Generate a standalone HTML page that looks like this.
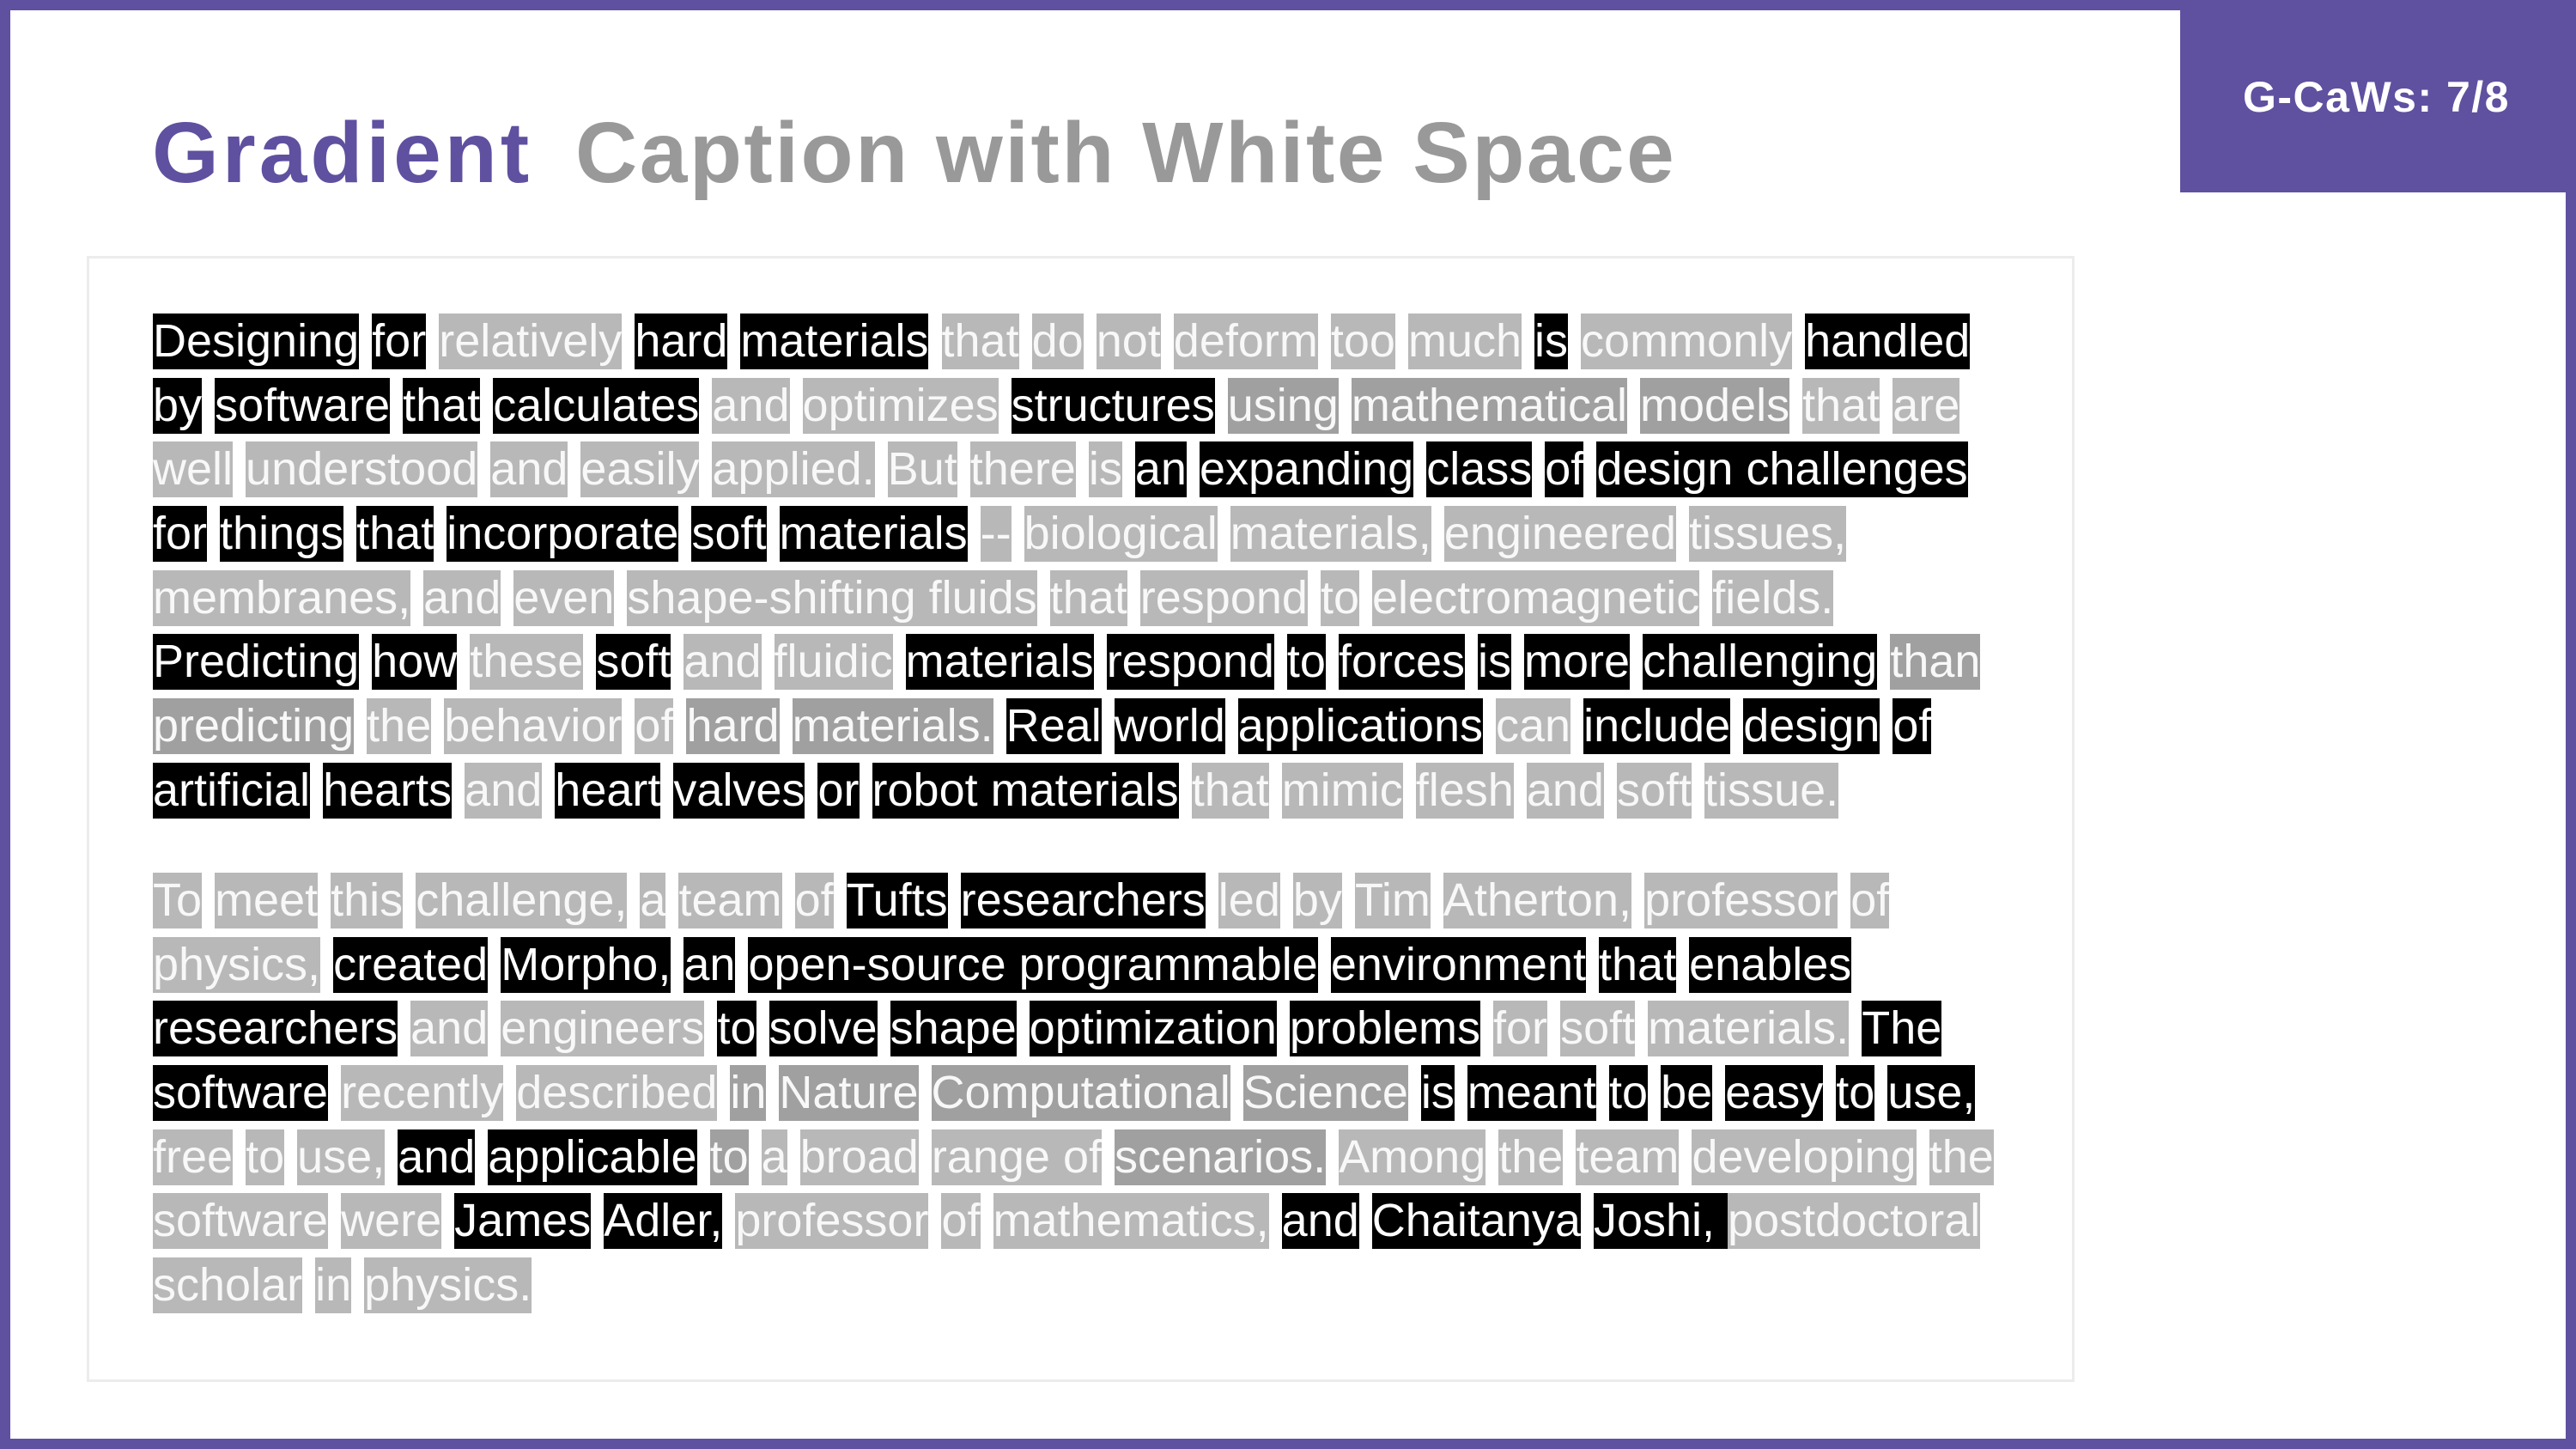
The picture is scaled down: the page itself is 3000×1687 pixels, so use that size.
<!DOCTYPE html>
<html><head><meta charset="utf-8"><style>
html,body{margin:0;padding:0}
body{width:3000px;height:1687px;position:relative;background:#fff;overflow:hidden;font-family:"Liberation Sans",Arial,sans-serif}
.frame{position:absolute;left:0;top:0;width:3000px;height:1687px;box-sizing:border-box;border:12px solid #6050a0}
.tag{position:absolute;left:2539px;top:2px;width:461px;height:222px;background:#6050a0;color:#fff;font-weight:bold;font-size:50px;text-align:center;line-height:222px;box-sizing:border-box;padding-right:4px;letter-spacing:1.5px}
.tagbg{position:absolute;left:2539px;top:0;width:461px;height:222px;background:#6050a0}
.t1{position:absolute;left:177px;top:118px;font-size:100px;font-weight:bold;color:#6050a0;letter-spacing:4px;line-height:120px;white-space:nowrap}
.t2{position:absolute;left:670px;top:118px;font-size:100px;font-weight:bold;color:#999;letter-spacing:2.5px;line-height:120px;white-space:nowrap}
.box{position:absolute;left:101px;top:298px;width:2315px;height:1311px;box-sizing:border-box;border:3px solid #ececec}
.ln{position:absolute;left:178px;height:65px;white-space:pre;font-size:54px;line-height:65px}
.ln span{display:inline-block;height:65px;line-height:65px;vertical-align:top}
.b{background:#000;color:#fff}
.l{background:#b8b8b8;color:#f8f8f8}
.m{background:#a0a0a0;color:#f8f8f8}
</style></head><body>
<div class="frame"></div>
<div class="tagbg"></div>
<div class="tag">G-CaWs: 7/8</div>
<div class="t1">Gradient</div>
<div class="t2">Caption with White Space</div>
<div class="box"></div>

<div class="ln" style="top:365px"><span class="b">Designing</span> <span class="b">for</span> <span class="l">relatively</span> <span class="b">hard</span> <span class="b">materials</span> <span class="l">that</span> <span class="l">do</span> <span class="l">not</span> <span class="l">deform</span> <span class="l">too</span> <span class="l">much</span> <span class="b">is</span> <span class="l">commonly</span> <span class="b">handled</span></div>
<div class="ln" style="top:440px"><span class="b">by</span> <span class="b">software</span> <span class="b">that</span> <span class="b">calculates</span> <span class="l">and</span> <span class="l">optimizes</span> <span class="b">structures</span> <span class="m">using</span> <span class="m">mathematical</span> <span class="m">models</span> <span class="l">that</span> <span class="l">are</span></div>
<div class="ln" style="top:514px"><span class="l">well</span> <span class="l">understood</span> <span class="l">and</span> <span class="l">easily</span> <span class="l">applied.</span> <span class="l">But</span> <span class="l">there</span> <span class="l">is</span> <span class="b">an</span> <span class="b">expanding</span> <span class="b">class</span> <span class="b">of</span> <span class="b">design challenges</span></div>
<div class="ln" style="top:589px"><span class="b">for</span> <span class="b">things</span> <span class="b">that</span> <span class="b">incorporate</span> <span class="b">soft</span> <span class="b">materials</span> <span class="l">--</span> <span class="l">biological</span> <span class="l">materials,</span> <span class="l">engineered</span> <span class="l">tissues,</span></div>
<div class="ln" style="top:664px"><span class="l">membranes,</span> <span class="l">and</span> <span class="l">even</span> <span class="l">shape-shifting fluids</span> <span class="l">that</span> <span class="l">respond</span> <span class="l">to</span> <span class="l">electromagnetic</span> <span class="l">fields.</span></div>
<div class="ln" style="top:738px"><span class="b">Predicting</span> <span class="b">how</span> <span class="l">these</span> <span class="b">soft</span> <span class="l">and</span> <span class="l">fluidic</span> <span class="b">materials</span> <span class="b">respond</span> <span class="b">to</span> <span class="b">forces</span> <span class="b">is</span> <span class="b">more</span> <span class="b">challenging</span> <span class="m">than</span></div>
<div class="ln" style="top:813px"><span class="m">predicting</span> <span class="l">the</span> <span class="l">behavior</span> <span class="l">of</span> <span class="m">hard</span> <span class="m">materials.</span> <span class="b">Real</span> <span class="b">world</span> <span class="b">applications</span> <span class="l">can</span> <span class="b">include</span> <span class="b">design</span> <span class="b">of</span></div>
<div class="ln" style="top:888px"><span class="b">artificial</span> <span class="b">hearts</span> <span class="l">and</span> <span class="b">heart</span> <span class="b">valves</span> <span class="b">or</span> <span class="b">robot materials</span> <span class="l">that</span> <span class="l">mimic</span> <span class="l">flesh</span> <span class="l">and</span> <span class="l">soft</span> <span class="l">tissue.</span></div>

<div class="ln" style="top:1016px"><span class="l">To</span> <span class="l">meet</span> <span class="l">this</span> <span class="l">challenge,</span> <span class="l">a</span> <span class="l">team</span> <span class="l">of</span> <span class="b">Tufts</span> <span class="b">researchers</span> <span class="l">led</span> <span class="l">by</span> <span class="l">Tim</span> <span class="l">Atherton,</span> <span class="l">professor</span> <span class="l">of</span></div>
<div class="ln" style="top:1091px"><span class="l">physics,</span> <span class="b">created</span> <span class="b">Morpho,</span> <span class="b">an</span> <span class="b">open-source programmable</span> <span class="b">environment</span> <span class="b">that</span> <span class="b">enables</span></div>
<div class="ln" style="top:1165px"><span class="b">researchers</span> <span class="l">and</span> <span class="l">engineers</span> <span class="b">to</span> <span class="b">solve</span> <span class="b">shape</span> <span class="b">optimization</span> <span class="b">problems</span> <span class="l">for</span> <span class="l">soft</span> <span class="l">materials.</span> <span class="b">The</span></div>
<div class="ln" style="top:1240px"><span class="b">software</span> <span class="l">recently</span> <span class="l">described</span> <span class="m">in</span> <span class="m">Nature</span> <span class="m">Computational</span> <span class="m">Science</span> <span class="b">is</span> <span class="b">meant</span> <span class="b">to</span> <span class="b">be</span> <span class="b">easy</span> <span class="b">to</span> <span class="b">use,</span></div>
<div class="ln" style="top:1315px"><span class="l">free</span> <span class="l">to</span> <span class="l">use,</span> <span class="b">and</span> <span class="b">applicable</span> <span class="m">to</span> <span class="l">a</span> <span class="l">broad</span> <span class="l">range of</span> <span class="m">scenarios.</span> <span class="l">Among</span> <span class="l">the</span> <span class="l">team</span> <span class="l">developing</span> <span class="l">the</span></div>
<div class="ln" style="top:1389px"><span class="l">software</span> <span class="l">were</span> <span class="b">James</span> <span class="b">Adler,</span> <span class="l">professor</span> <span class="l">of</span> <span class="l">mathematics,</span> <span class="b">and</span> <span class="b">Chaitanya</span> <span class="b">Joshi, </span><span class="l">postdoctoral</span></div>
<div class="ln" style="top:1464px"><span class="l">scholar</span> <span class="l">in</span> <span class="l">physics.</span></div>
</body></html>
